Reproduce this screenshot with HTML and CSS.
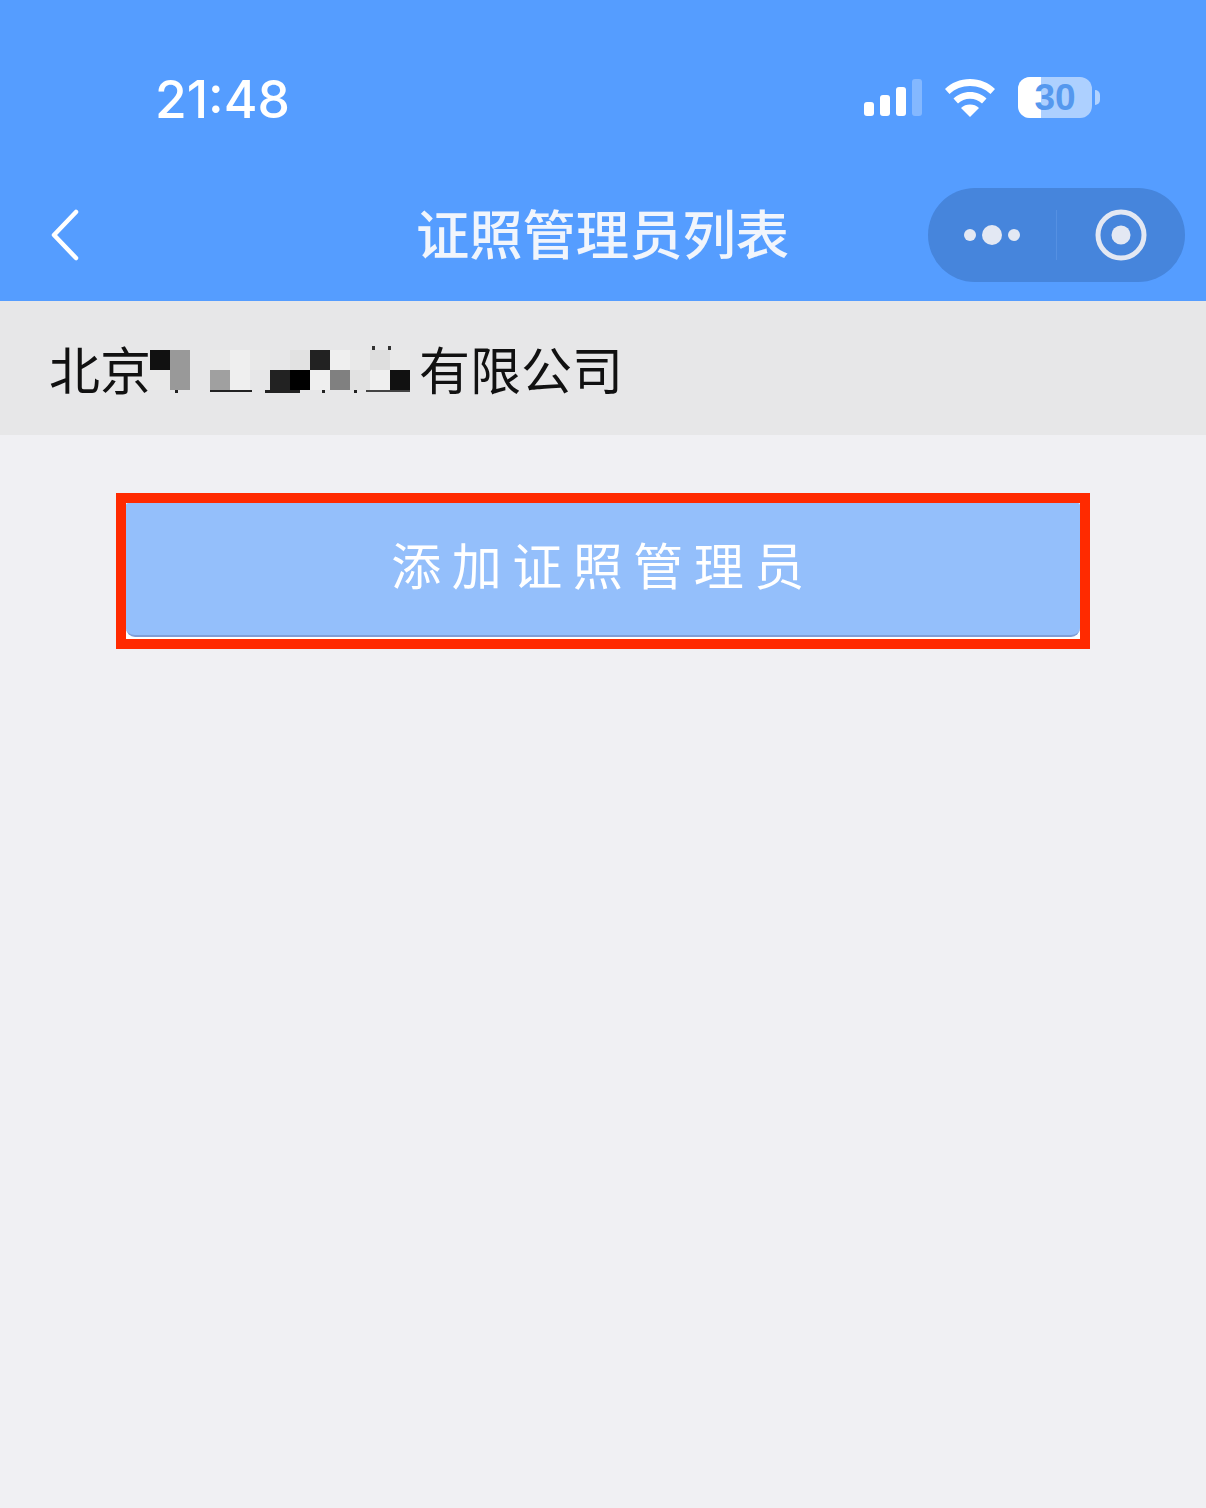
FILE: index.html
```html
<!DOCTYPE html>
<html lang="zh-CN">
<head>
<meta charset="utf-8">
<title>证照管理员列表</title>
<link rel="stylesheet" href="styles.css">
</head>
<body>
<header class="header">
  <div class="status">
    <span class="time">21:48</span>
    <div class="status-icons">
      <svg class="signal" width="58" height="37" viewBox="0 0 58 37"><rect x="0" y="23" width="10" height="14" rx="3" fill="#fff"/><rect x="16" y="16" width="10" height="21" rx="3" fill="#fff"/><rect x="32" y="8" width="10" height="29" rx="3" fill="#fff"/><rect x="48" y="0" width="10" height="37" rx="3" fill="#fff" fill-opacity=".28"/></svg>
      <svg class="wifi" width="52" height="38" viewBox="0 0 52 38"><path d="M26 0C16 0 7.500 3.800 1 10l4.500 5C11 9.800 18 7 26 7s15 2.800 20.500 8l4.500-5C44.500 3.800 36 0 26 0z" fill="#fff"/><path d="M26 13c-6.500 0-12 2.400-16.500 6.500l4.500 5c3.300-3 7.300-4.700 12-4.700s8.700 1.700 12 4.700l4.500-5C38 15.400 32.500 13 26 13z" fill="#fff"/><path d="M26 25.500c-3.500 0-6.500 1.200-9 3.400L26 38l9-9.100c-2.500-2.200-5.500-3.400-9-3.400z" fill="#fff"/></svg>
      <div class="battery">
        <div class="battery-body"><span class="battery-fill"></span><span class="battery-num">30</span></div>
        <span class="battery-nub"></span>
      </div>
    </div>
  </div>
  <div class="nav">
    <svg class="back" width="30" height="52" viewBox="0 0 30 52"><path d="M26 3 L4 26 L26 49" fill="none" stroke="#fff" stroke-width="4.500" stroke-linecap="round" stroke-linejoin="round"/></svg>
    <h1 class="title">证照管理员列表</h1>
    <div class="capsule">
      <svg class="more" width="58" height="22" viewBox="0 0 58 22"><circle cx="7" cy="11" r="6" fill="#e3e8f3"/><circle cx="29" cy="11" r="10" fill="#e3e8f3"/><circle cx="51" cy="11" r="6" fill="#e3e8f3"/></svg>
      <span class="capsule-line"></span>
      <svg class="ring" width="52" height="52" viewBox="0 0 52 52"><circle cx="26" cy="26" r="23" fill="none" stroke="#e3e8f3" stroke-width="5"/><circle cx="26" cy="26" r="9.500" fill="#e3e8f3"/></svg>
    </div>
  </div>
</header>

<section class="company">
  <span>北京</span>
  <div class="mosaic">
    <i class="c k1"></i><i class="c g1"></i><i class="c"></i><i class="c l1"></i><i class="c l2"></i><i class="c l1"></i><i class="c"></i><i class="c l3"></i><i class="c k2"></i><i class="c l2"></i><i class="c l1"></i><i class="c l4"></i><i class="c l1"></i>
    <i class="c l1"></i><i class="c g1"></i><i class="c"></i><i class="c g2"></i><i class="c l2"></i><i class="c"></i><i class="c k2"></i><i class="c k3"></i><i class="c l2"></i><i class="c g3"></i><i class="c l3"></i><i class="c l2"></i><i class="c k1"></i>
    <b class="rem r1"></b><b class="rem r2"></b><b class="rem r3"></b><b class="rem r4"></b><b class="rem r5"></b><b class="rem r6"></b>
    <b class="rem t1"></b><b class="rem t2"></b>
  </div>
  <span>有限公司</span>
</section>

<main class="main">
  <div class="highlight">
    <button class="add-btn" type="button">添加证照管理员</button>
  </div>
</main>
</body>
</html>
```
FILE: styles.css
```css
* { box-sizing: border-box; }
html, body { margin: 0; padding: 0; }
body {
  width: 1206px;
  height: 1508px;
  overflow: hidden;
  background: #f0f0f3;
  font-family: "Noto Sans CJK SC", "Noto Sans", sans-serif;
}
.header {
  height: 301px;
  background: #559dff;
  color: #fff;
  display: flex;
  flex-direction: column;
}
.status {
  height: 188px;
  padding: 72px 106px 0 155px;
  display: flex;
  justify-content: space-between;
  align-items: flex-start;
}
.time {
  font-family: Inter, Roboto, sans-serif;
  font-size: 51.500px;
  line-height: 54px;
  font-weight: 500;
}
.status-icons {
  display: flex;
  align-items: flex-start;
  margin-top: 5px;
}
.signal { margin-top: 2px; margin-right: 22px; }
.wifi { margin-top: 2px; margin-right: 22px; }
.battery { display: flex; align-items: center; }
.battery-body {
  position: relative;
  width: 74px;
  height: 41px;
  border-radius: 12px;
  overflow: hidden;
  background: rgba(255, 255, 255, 0.52);
  display: flex;
  align-items: center;
  justify-content: center;
}
.battery-fill {
  position: absolute;
  left: 0;
  top: 0;
  bottom: 0;
  width: 23px;
  background: #fff;
}
.battery-num {
  position: relative;
  font-family: "Liberation Sans", sans-serif;
  font-weight: 700;
  font-size: 37px;
  line-height: 41px;
  color: #5598ee;
}
.battery-nub {
  width: 5px;
  height: 15px;
  margin-left: 3px;
  background: rgba(255, 255, 255, 0.55);
  border-radius: 0 8px 8px 0;
}
.nav {
  position: relative;
  height: 113px;
  padding: 0 21px 19px 50px;
  display: flex;
  align-items: center;
  justify-content: space-between;
}
.back { display: block; }
.title {
  position: absolute;
  left: -1px;
  right: 0;
  top: 13px;
  margin: 0;
  text-align: center;
  font-size: 53.300px;
  line-height: 62px;
  font-weight: 500;
  color: #f1f5fc;
}
.capsule {
  width: 257px;
  height: 94px;
  border-radius: 47px;
  background: #4685dc;
  display: flex;
  align-items: center;
  padding-left: 35px;
}
.capsule-line {
  width: 1px;
  height: 50px;
  margin-left: 35px;
  background: #5590e2;
}
.ring { margin-left: 38px; }

.company {
  height: 134px;
  background: #e7e7e8;
  padding: 0 0 0 49px;
  display: flex;
  align-items: center;
  font-size: 51px;
  line-height: 60px;
  color: #111;
}
.mosaic {
  position: relative;
  display: grid;
  grid-template-columns: repeat(13, 20px);
  grid-auto-rows: 20px;
  width: 269px;
  height: 40px;
  margin-top: 4px;
  margin-left: -1px;
  padding-right: 9px;
}
.c { display: block; }
.k1 { background: #111; }
.k2 { background: #222; }
.k3 { background: #000; }
.g1 { background: #999; }
.g2 { background: #a0a0a0; }
.g3 { background: #808080; }
.l1 { background: #e9e9e9; }
.l2 { background: #efefef; }
.l3 { background: #e2e2e2; }
.l4 { background: #dedede; }
.rem { position: absolute; top: 40px; height: 3px; background: #222; }
.r1 { left: 25px; width: 3px; }
.r2 { left: 60px; width: 42px; height: 2px; }
.r3 { left: 115px; width: 35px; }
.r4 { left: 172px; width: 3px; }
.r5 { left: 204px; width: 3px; }
.r6 { left: 216px; width: 44px; background: #444; height: 2px; }
.t1 { left: 222px; top: -4px; width: 3px; height: 4px; background: #333; }
.t2 { left: 238px; top: -4px; width: 3px; height: 4px; background: #333; }

.main { padding: 58px 116px 0; }
.highlight {
  height: 156px;
  border: 10px solid #ff2a00;
  background: #fff;
}
.add-btn {
  display: block;
  width: 100%;
  height: 134px;
  border: 0;
  border-bottom: 2px solid #7f9ed6;
  border-radius: 2px 2px 9px 9px;
  background: #94bffb;
  color: #fff;
  padding: 0 0 12px;
  font-family: inherit;
  font-size: 50px;
  font-weight: 400;
  letter-spacing: 10.500px;
  line-height: 60px;
  text-align: center;
}
```
